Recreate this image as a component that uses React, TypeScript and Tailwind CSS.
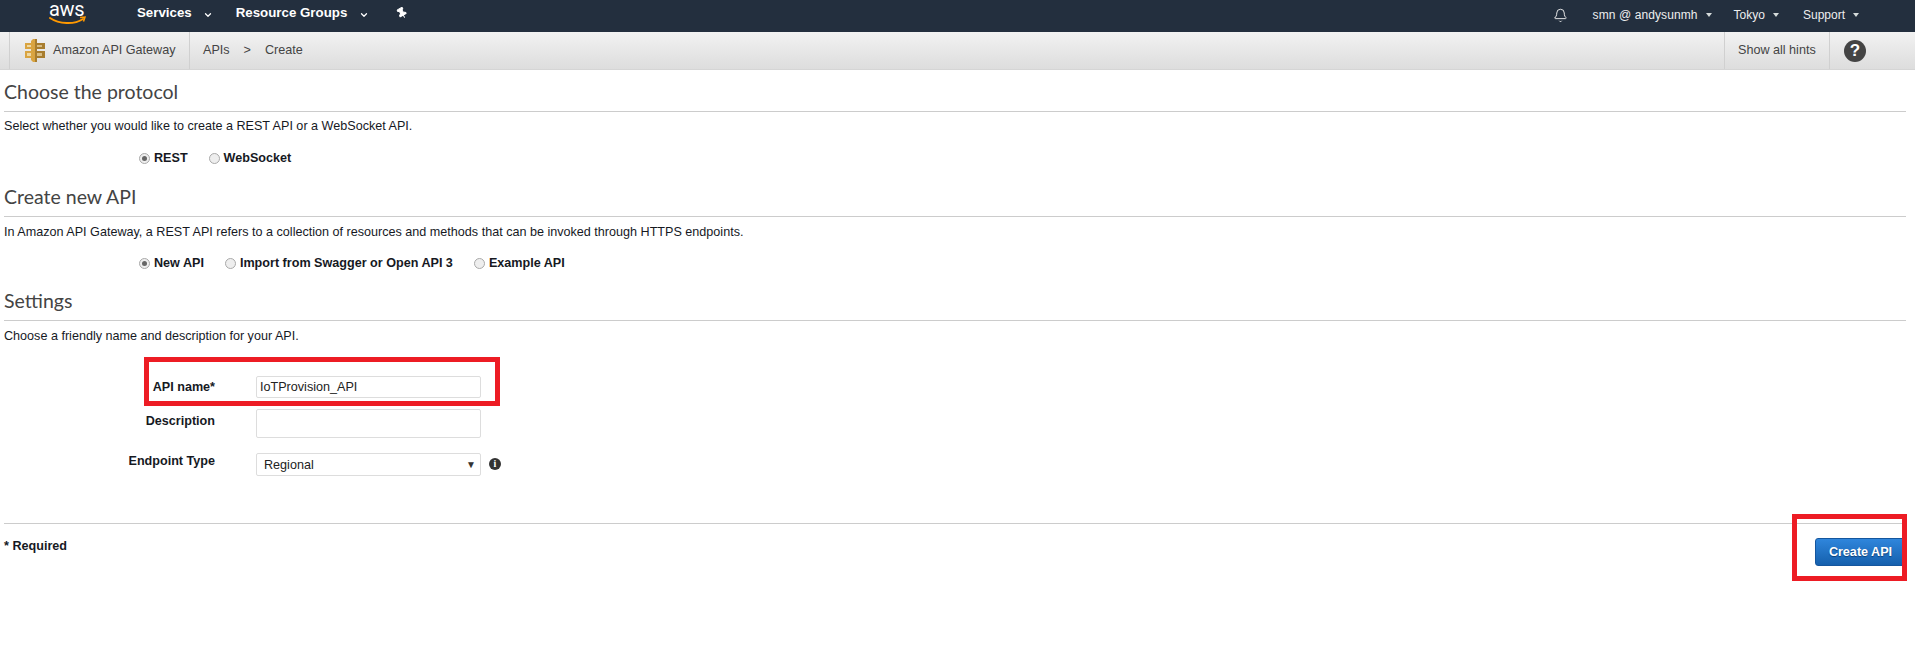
import { Bell, ChevronDown, Pin } from 'lucide-react';

function Caret() {
  return <span className="ml-[8px] inline-block h-0 w-0 border-x-[3px] border-t-[4px] border-x-transparent border-t-[#d5dbdb]" />;
}

function Radio({ checked }: { checked?: boolean }) {
  return (
    <span className="flex h-[11px] w-[11px] items-center justify-center rounded-full border border-[#a9a9a9] bg-[#eeeeee]">
      {checked && <span className="h-[5px] w-[5px] rounded-full bg-[#666666]" />}
    </span>
  );
}

function RadioRow({ items, className }: { items: string[]; className?: string }) {
  return (
    <div className={`flex h-4 items-center pl-[135px] text-[12.6px] font-bold text-[#16191f] ${className ?? ''}`}>
      {items.map((item, i) => (
        <label key={item} className="mr-[21px] flex items-center gap-[4px]">
          <Radio checked={i === 0} />
          {item}
        </label>
      ))}
    </div>
  );
}

function Section({ title, text, className, textClass }: { title: string; text: string; className?: string; textClass?: string }) {
  return (
    <div className={className}>
      <h2 className="h-[32px] border-b border-[#cccccc] font-['Lato',sans-serif] text-[19.5px] leading-[24px] text-[#444444]">{title}</h2>
      <p className={`text-[12.6px] leading-[16px] text-[#16191f] ${textClass ?? 'mt-[7px]'}`}>{text}</p>
    </div>
  );
}

function GatewayLogo() {
  return (
    <svg width="20" height="23" viewBox="0 0 20 23">
      <path d="M0 4h6v6H0zM0 12h6v7H0z" fill="#d9a441" />
      <path d="M12 4h8v6h-8zM12 12h8v7h-8z" fill="#a87d2e" />
      <path d="M2 6h4v2H2zM2 14h4v3H2z" fill="#efd9a5" />
      <path d="M12 6h5v2h-5zM12 14h5v3h-5z" fill="#d8bd84" />
      <path d="M8 0h2v23H8l-2-2V2z" fill="#d9a441" />
      <path d="M10 0h2v23h-2z" fill="#a87d2e" />
    </svg>
  );
}

function AwsLogo() {
  return (
    <div className="relative ml-[49px] h-[26px] w-[38px] -translate-y-[3px]">
      <span className="block font-['Roboto',sans-serif] text-[20px] leading-[18px] tracking-[-0.3px] text-white">aws</span>
      <svg className="absolute left-0 top-[13px]" width="38" height="13" viewBox="0 0 38 13">
        <path d="M1 5c9 6 24 7 33 1" fill="none" stroke="#f90" strokeWidth="2" strokeLinecap="round" />
        <path d="M31 4.500l5-.500-1.500 4.500" fill="none" stroke="#f90" strokeWidth="1.500" />
      </svg>
    </div>
  );
}

export default function App() {
  return (
    <div className="relative h-[665px] w-[1915px] overflow-hidden bg-white font-['Liberation_Sans',Arial,sans-serif]">
      <nav className="flex h-8 items-center bg-[#232f3e] text-white">
        <AwsLogo />
        <span className="ml-[50px] -translate-y-[3px] text-[13.3px] font-bold">Services</span>
        <ChevronDown className="ml-[11px] mt-[-3px]" size={10} strokeWidth={3} />
        <span className="ml-[23px] -translate-y-[3px] text-[13.3px] font-bold">Resource Groups</span>
        <ChevronDown className="ml-[12px] mt-[-3px]" size={10} strokeWidth={3} />
        <Pin className="ml-[27px] -translate-y-[3px] rotate-[-30deg]" size={12} fill="#ffffff" />
        <div className="ml-auto flex -translate-y-[1px] items-center pr-[56px] text-[12px] text-[#eeeeee]">
          <Bell size={15} strokeWidth={1.500} />
          <span className="ml-[25px] tracking-[0.1px]">smn @ andysunmh</span>
          <Caret />
          <span className="ml-[22px]">Tokyo</span>
          <Caret />
          <span className="ml-[24px]">Support</span>
          <Caret />
        </div>
      </nav>
      <div className="flex h-[38px] items-stretch border-b border-[#d5d5d5] bg-gradient-to-b from-[#f2f2f2] to-[#dddddd] text-[12.6px] text-[#444444]">
        <div className="ml-[9px] flex w-[181px] items-center border-x border-[#d0d0d0] pl-[15px]">
          <GatewayLogo />
          <span className="ml-[8px]">Amazon API Gateway</span>
        </div>
        <div className="ml-[13px] flex items-center">
          <span>APIs</span>
          <span className="ml-[14px]">&gt;</span>
          <span className="ml-[14px]">Create</span>
        </div>
        <div className="ml-auto flex w-[106px] items-center border-x border-[#d0d0d0] pl-[13px]">Show all hints</div>
        <div className="flex w-[85px] items-center pl-[14px]">
          <span className="flex h-[22px] w-[22px] items-center justify-center rounded-full bg-[#444444] text-[17px] font-bold text-white">?</span>
        </div>
      </div>
      <main className="pl-1 pr-[9px]">
        <Section className="mt-[10px]" textClass="mt-[6px]" title="Choose the protocol" text="Select whether you would like to create a REST API or a WebSocket API." />
        <RadioRow className="mt-[16px]" items={['REST', 'WebSocket']} />
        <Section className="mt-[19px]" title="Create new API" text="In Amazon API Gateway, a REST API refers to a collection of resources and methods that can be invoked through HTTPS endpoints." />
        <RadioRow className="mt-[15px]" items={['New API', 'Import from Swagger or Open API 3', 'Example API']} />
        <Section className="mt-[18px]" title="Settings" text="Choose a friendly name and description for your API." />
        <div className="mt-[32px] text-[12.6px] font-bold leading-[16px] text-[#16191f]">
          <div className="flex items-start">
            <label className="w-[211px] pt-[3px] text-right">API name*</label>
            <input readOnly value="IoTProvision_API" className="ml-[41px] h-[22px] w-[225px] rounded-[2px] border border-[#dddddd] px-[3px] font-normal text-[#222222]" />
          </div>
          <div className="mt-[11px] flex items-start">
            <label className="w-[211px] pt-[4px] text-right">Description</label>
            <textarea readOnly className="ml-[41px] h-[29px] w-[225px] resize-none rounded-[2px] border border-[#dddddd]" />
          </div>
          <div className="mt-[15px] flex items-start">
            <label className="w-[211px] text-right">Endpoint Type</label>
            <div className="ml-[41px] flex h-[23px] w-[225px] items-center justify-between rounded-[2px] border border-[#dddddd] pl-[7px] pr-[4px] font-normal text-[#222222]">
              Regional
              <span className="text-[10px] text-[#333333]">▼</span>
            </div>
            <span className="ml-[8px] mt-[5px] flex h-[12px] w-[12px] items-center justify-center rounded-full bg-[#333333] font-['Liberation_Serif',serif] text-[10px] font-bold text-white">i</span>
          </div>
        </div>
        <div className="mt-[47px] flex justify-between border-t border-[#cccccc] pt-[14px]">
          <span className="text-[12.6px] font-bold leading-[16px] text-[#16191f]">* Required</span>
          <button className="h-[28px] w-[91px] rounded-[3px] border border-[#15569e] bg-gradient-to-b from-[#2f86dc] to-[#1560ad] text-[12.6px] font-bold text-white [text-shadow:0_1px_1px_#0b3f78]">Create API</button>
        </div>
      </main>
      <div className="absolute left-[144px] top-[357px] h-[49px] w-[356px] border-[5px] border-[#ed1c24]" />
      <div className="absolute left-[1792px] top-[514px] h-[67px] w-[115px] border-[5px] border-[#ed1c24]" />
    </div>
  );
}
